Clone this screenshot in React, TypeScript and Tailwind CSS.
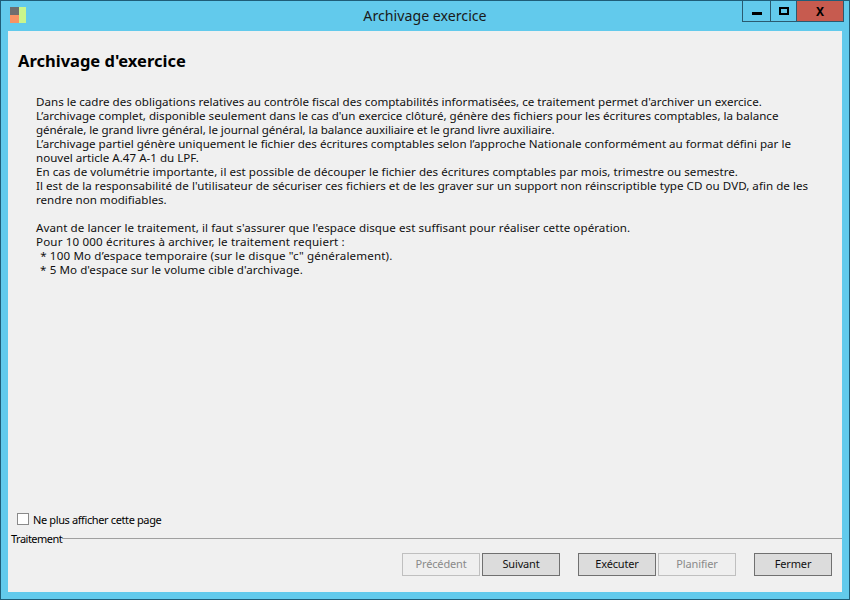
const lines = [
  { text: "Dans le cadre des obligations relatives au contrôle fiscal des comptabilités informatisées, ce traitement permet d'archiver un exercice.", cls: "" },
  { text: "L’archivage complet, disponible seulement dans le cas d'un exercice clôturé, génère des fichiers pour les écritures comptables, la balance", cls: "" },
  { text: "générale, le grand livre général, le journal général, la balance auxiliaire et le grand livre auxiliaire.", cls: "tracking-[-0.09px]" },
  { text: "L’archivage partiel génère uniquement le fichier des écritures comptables selon l’approche Nationale conformément au format défini par le", cls: "" },
  { text: "nouvel article A.47 A-1 du LPF.", cls: "" },
  { text: "En cas de volumétrie importante, il est possible de découper le fichier des écritures comptables par mois, trimestre ou semestre.", cls: "tracking-[0.03px]" },
  { text: "Il est de la responsabilité de l'utilisateur de sécuriser ces fichiers et de les graver sur un support non réinscriptible type CD ou DVD, afin de les", cls: "tracking-[0.03px]" },
  { text: "rendre non modifiables.", cls: "" },
  { text: "", cls: "" },
  { text: "Avant de lancer le traitement, il faut s'assurer que l'espace disque est suffisant pour réaliser cette opération.", cls: "tracking-[0.07px]" },
  { text: "Pour 10 000 écritures à archiver, le traitement requiert :", cls: "tracking-[0.15px]" },
  { text: " * 100 Mo d’espace temporaire (sur le disque \"c\" généralement).", cls: "ml-px tracking-[0.15px]" },
  { text: " * 5 Mo d'espace sur le volume cible d'archivage.", cls: "ml-px tracking-[0.07px]" },
];

function Btn({ label, disabled, className }: { label: string; disabled?: boolean; className?: string }) {
  return (
    <div
      className={
        "flex h-[23px] w-[78px] items-center justify-center border text-[11px] tracking-[-0.15px] " +
        (disabled
          ? "border-[#bfbfbf] bg-[#efefef] text-[#8a8a8a] "
          : "border-[#707070] bg-[#dcdcdc] text-[#111] ") +
        (className ?? "")
      }
    >
      {label}
    </div>
  );
}

export default function App() {
  return (
    <div className="flex h-[600px] w-[850px] flex-col border border-[#1f5d78] bg-[#62caec] font-['Noto_Sans',sans-serif] text-black">
      <div className="relative flex h-[30px] shrink-0 items-center justify-center">
        <div className="absolute left-[9px] top-[6px] flex h-4 w-4">
          <div className="flex w-[9px] flex-col">
            <div className="h-2 bg-[#6e6e6e]" />
            <div className="h-2 bg-[#f79364]" />
          </div>
          <div className="w-[7px] bg-[#c9f58c]" />
        </div>
        <span className="text-[14.2px] text-[#1a1a1a]">Archivage exercice</span>
        <div className="absolute right-[5px] top-0 flex h-[21px] border-x border-b border-[#2a5a70]">
          <div className="flex w-[28px] items-center justify-center border-r border-[#2a5a70]">
            <div className="mt-[4px] h-[3px] w-[10px] bg-black" />
          </div>
          <div className="flex w-[26px] items-center justify-center border-r border-[#2a5a70]">
            <div className="h-[8px] w-[10px] border-2 border-black" />
          </div>
          <div className="flex w-[46px] items-center justify-center bg-[#c75b4f]">
            <span className="mt-[2px] text-[12px] font-bold leading-none">X</span>
          </div>
        </div>
      </div>

      <div className="mx-[7px] mb-[7px] flex min-h-0 flex-1 flex-col bg-[#f0f0f0]">
        <h1 className="ml-[10px] mt-[20px] text-[16.5px] font-bold leading-5">Archivage d'exercice</h1>
        <div className="ml-[28px] mt-[24px] text-[11.6px] leading-[14px] text-[#111]">
          {lines.map((l, i) => (
            <div key={i} className={"h-[14px] whitespace-pre " + l.cls}>
              {l.text}
            </div>
          ))}
        </div>

        <div className="mt-auto">
          <div className="ml-[9px] flex items-center gap-[4px]">
            <div className="h-[12px] w-[12px] border border-[#8a8a8a] bg-white" />
            <span className="pt-[2px] text-[11px] leading-[14px] tracking-[-0.38px]">Ne plus afficher cette page</span>
          </div>
          <div className="mt-[5px] flex items-center">
            <span className="ml-[3px] text-[11px] leading-[14px] tracking-[-0.5px]">Traitement</span>
            <div className="mb-[2px] h-px flex-1 border-b border-[#a0a0a0]" />
          </div>
          <div className="mb-[16px] mr-[10px] mt-[7px] flex justify-end">
            <Btn label="Précédent" disabled />
            <Btn label="Suivant" className="ml-[2px]" />
            <Btn label="Exécuter" className="ml-[18px]" />
            <Btn label="Planifier" disabled className="ml-[2px]" />
            <Btn label="Fermer" className="ml-[18px]" />
          </div>
        </div>
      </div>
    </div>
  );
}
